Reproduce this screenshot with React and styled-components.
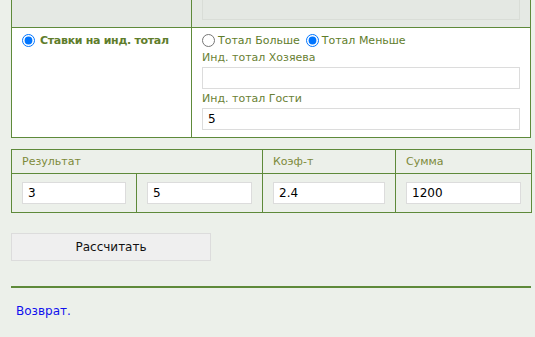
import React from 'react'
import styled, { createGlobalStyle } from 'styled-components'

const Global = createGlobalStyle`
  html, body {
    margin: 0;
    padding: 0;
    background: #ecf0ea;
  }
  body {
    font-family: Verdana, "DejaVu Sans", sans-serif;
    font-size: 11px;
    color: #000;
  }
`

const App = () => {
  return (
    <Page>
      <Global />
      <Table>
        <colgroup>
          <col style={{ width: 180 }} />
          <col />
        </colgroup>
        <tbody>
          <TopRow>
            <LeftCell />
            <RightCell>
              <DisabledBox />
            </RightCell>
          </TopRow>
          <BetRow>
            <LeftCell>
              <RadioLabel bold gap={5}>
                <Radio type="radio" name="bet" defaultChecked />
                Ставки на инд. тотал
              </RadioLabel>
            </LeftCell>
            <RightCell>
              <RadioLine>
                <RadioLabel gap={3}>
                  <Radio type="radio" name="total" />
                  Тотал Больше
                </RadioLabel>
                <RadioLabel gap={3}>
                  <Radio type="radio" name="total" defaultChecked />
                  Тотал Меньше
                </RadioLabel>
              </RadioLine>
              <Caption>Инд. тотал Хозяева</Caption>
              <Field defaultValue="" />
              <Caption>Инд. тотал Гости</Caption>
              <Field defaultValue="5" />
            </RightCell>
          </BetRow>
        </tbody>
      </Table>

      <ResultTable>
        <colgroup>
          <col style={{ width: 125 }} />
          <col style={{ width: 126 }} />
          <col style={{ width: 133 }} />
          <col style={{ width: 136 }} />
        </colgroup>
        <tbody>
          <tr>
            <HeadCell colSpan={2}>Результат</HeadCell>
            <HeadCell>Коэф-т</HeadCell>
            <HeadCell>Сумма</HeadCell>
          </tr>
          <tr>
            <InputCell><Field defaultValue="3" /></InputCell>
            <InputCell><Field defaultValue="5" /></InputCell>
            <InputCell><Field defaultValue="2.4" /></InputCell>
            <InputCell><Field defaultValue="1200" /></InputCell>
          </tr>
        </tbody>
      </ResultTable>

      <Button>Рассчитать</Button>
      <Rule />
      <BackLink href="#">Возврат.</BackLink>
    </Page>
  )
}

export default App

const Page = styled.div`
  padding: 0 4px 20px 11px;
  margin-top: -20px;
`
const Table = styled.table`
  width: 520px;
  border-collapse: collapse;
  table-layout: fixed;
  td {
    border: 1px solid #5e8a3a;
    vertical-align: top;
  }
`
const TopRow = styled.tr`
  height: 46px;
  background: #e5e9e4;
`
const BetRow = styled.tr`
  background: #fff;
`
const LeftCell = styled.td`
  padding: 5px 10px 0 10px;
`
const RightCell = styled.td`
  padding: 5px 10px 7px 10px;
`
const DisabledBox = styled.div`
  height: 30px;
  margin-top: 2px;
  background: #e4e8e3;
  border: 1px solid #d9ddd7;
`
const RadioLine = styled.div`
  display: flex;
  gap: 6px;
  height: 15px;
`
const RadioLabel = styled.label`
  display: flex;
  align-items: center;
  gap: ${p => p.gap}px;
  height: 15px;
  color: #5f7d2c;
  font-weight: ${p => (p.bold ? 'bold' : 'normal')};
  letter-spacing: ${p => (p.bold ? '-0.3px' : 'normal')};
  white-space: nowrap;
`
const Radio = styled.input`
  margin: 0;
  width: 13px;
  height: 13px;
`
const Caption = styled.div`
  color: #6a7f34;
  margin-top: 2px;
  height: 16px;
  line-height: 16px;
`
const Field = styled.input`
  display: block;
  box-sizing: border-box;
  width: 100%;
  height: 22px;
  margin: 1px 0 0;
  padding: 0 5px;
  border: 1px solid #dcdcdc;
  background: #fff;
  font-family: Verdana, "DejaVu Sans", sans-serif;
  font-size: 12px;
  color: #000;
  outline: none;
`
const ResultTable = styled.table`
  width: 520px;
  margin-top: 11px;
  border-collapse: collapse;
  table-layout: fixed;
  td {
    border: 1px solid #5e8a3a;
  }
`
const HeadCell = styled.td`
  height: 23px;
  padding: 0 10px;
  color: #7d8a3a;
`
const InputCell = styled.td`
  padding: 8px 10px;
  ${Field} {
    margin: 0;
  }
`
const Button = styled.button`
  display: block;
  width: 200px;
  height: 28px;
  margin-top: 20px;
  background: #efefef;
  border: 1px solid #dcdcdc;
  font-family: Verdana, "DejaVu Sans", sans-serif;
  font-size: 12px;
  color: #111;
  cursor: pointer;
`
const Rule = styled.div`
  height: 2px;
  margin-top: 25px;
  background: #5e8a3a;
`
const BackLink = styled.a`
  display: block;
  margin: 16px 0 0 5px;
  font-size: 12px;
  color: #1010ee;
  text-decoration: none;
`
